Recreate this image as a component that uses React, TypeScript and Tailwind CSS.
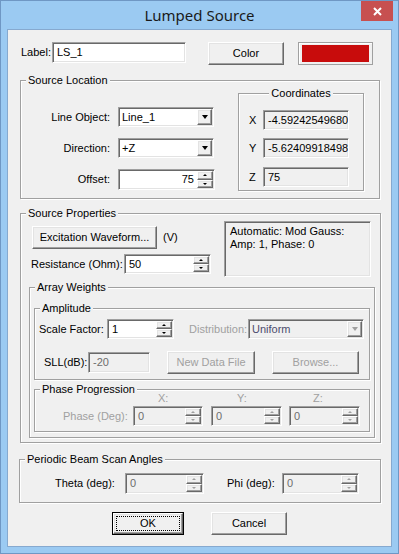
import React from "react";

const raised =
  "bg-[#f0f0f0] border border-t-white border-l-white border-r-[#696969] border-b-[#696969] shadow-[inset_-1px_-1px_0_#a0a0a0,inset_1px_1px_0_#e3e3e3]";
const sunken =
  "border border-t-[#a0a0a0] border-l-[#a0a0a0] border-r-white border-b-white shadow-[inset_1px_1px_0_#696969,inset_-1px_-1px_0_#e3e3e3]";

type BoxProps = {
  className?: string;
  value?: string;
  disabled?: boolean;
  white?: boolean;
  right?: boolean;
  children?: React.ReactNode;
};

function Field({ className, value, disabled, white }: BoxProps) {
  return (
    <div
      className={`${sunken} flex items-center pl-[4px] overflow-hidden whitespace-nowrap ${
        white ? "bg-white" : "bg-[#f0f0f0]"
      } ${disabled ? "text-[#6d6d6d]" : "text-black"} ${className}`}
    >
      {value}
    </div>
  );
}

function Btn({ className, disabled, children }: BoxProps) {
  return (
    <div
      className={`${raised} flex items-center justify-center whitespace-nowrap ${
        disabled ? "text-[#a0a0a0]" : "text-black"
      } ${className}`}
    >
      {children}
    </div>
  );
}

function Combo({ className, value, disabled }: BoxProps) {
  return (
    <div
      className={`${sunken} flex p-[1px] ${disabled ? "bg-[#f0f0f0] text-[#4d4d6d]" : "bg-white text-black"} ${className}`}
    >
      <div className="flex-1 flex items-center pl-[2px] overflow-hidden whitespace-nowrap">{value}</div>
      <div className={`${raised} w-[15px] flex items-center justify-center`}>
        <div
          className={`w-[1px] h-0 border-x-[3px] border-x-transparent border-t-[4px] ${
            disabled ? "border-t-[#a0a0a0]" : "border-t-black"
          }`}
        />
      </div>
    </div>
  );
}

function Spin({ className, value, disabled, right }: BoxProps) {
  const arrow = disabled ? "border-b-[#a0a0a0]" : "border-b-black";
  const arrowDown = disabled ? "border-t-[#a0a0a0]" : "border-t-black";
  return (
    <div
      className={`${sunken} flex p-[1px] ${disabled ? "bg-[#f0f0f0] text-[#6d6d6d]" : "bg-white text-black"} ${className}`}
    >
      <div
        className={`flex-1 flex items-center overflow-hidden whitespace-nowrap ${
          right ? "justify-end pr-[3px]" : "pl-[3px]"
        }`}
      >
        {value}
      </div>
      <div className="w-[16px] flex flex-col">
        <div className={`${raised} flex-1 flex items-center justify-center`}>
          <div className={`w-[1px] h-0 border-x-[2px] border-x-transparent border-b-[2px] ${arrow}`} />
        </div>
        <div className={`${raised} flex-1 flex items-center justify-center`}>
          <div className={`w-[1px] h-0 border-x-[2px] border-x-transparent border-t-[2px] ${arrowDown}`} />
        </div>
      </div>
    </div>
  );
}

function Group({
  className,
  legend,
  center,
  children,
}: {
  className?: string;
  legend: string;
  center?: boolean;
  children?: React.ReactNode;
}) {
  return (
    <fieldset
      className={`border border-[#a0a0a0] shadow-[inset_1px_1px_0_#fff,1px_1px_0_#fff] p-0 m-0 min-w-0 shrink-0 ${className}`}
    >
      <legend
        className={`px-[2px] leading-[13px] bg-[#f0f0f0] ${center ? "mx-auto" : "ml-[5px]"}`}
      >
        {legend}
      </legend>
      {children}
    </fieldset>
  );
}

export default function App() {
  return (
    <div className="w-[399px] h-[554px] bg-[#9bcaf2] border border-[#6f97c4] flex flex-col text-[11px] leading-[13px] text-black font-['Liberation_Sans',Arial,sans-serif]">
      {/* title bar */}
      <div className="h-[28px] flex items-start shrink-0">
        <div className="w-[37px]" />
        <div className="flex-1 text-center mt-[4px] text-[15px] leading-[20px] text-[#1a1a1a] font-['Noto_Sans','Open_Sans',sans-serif]">
          Lumped Source
        </div>
        <div className="w-[32px] h-[20px] mr-[5px] bg-[#c75050] flex items-center justify-center">
          <svg width="9" height="9" viewBox="0 0 9 9">
            <path d="M1 1L8 8M8 1L1 8" stroke="#fff" strokeWidth="2" />
          </svg>
        </div>
      </div>

      {/* client area */}
      <div className="mx-[6px] h-[518px] border border-[#86a9cf] bg-[#f0f0f0] flex flex-col shrink-0">
        {/* label row */}
        <div className="flex items-start mt-[12px]">
          <span className="ml-[13px] w-[31px] h-[21px] flex items-center">Label:</span>
          <Field className="w-[134px] h-[21px]" value="LS_1" white />
          <Btn className="ml-[22px] w-[76px] h-[23px]">Color</Btn>
          <div className="ml-[14px] w-[75px] h-[23px] border border-[#a0a0a0] shadow-[inset_1px_1px_0_#fff] px-[3px] py-[2px] flex">
            <div className="flex-1 bg-[#c80c0c]" />
          </div>
        </div>

        {/* source location */}
        <Group className="mt-[9px] ml-[12px] w-[360px] h-[125px]" legend="Source Location">
          <div className="flex">
            <div className="flex flex-col mt-[20px]">
              <div className="flex items-center">
                <span className="w-[89px] text-right">Line Object:</span>
                <Combo className="ml-[8px] w-[96px] h-[20px]" value="Line_1" />
              </div>
              <div className="flex items-center mt-[11px]">
                <span className="w-[89px] text-right">Direction:</span>
                <Combo className="ml-[8px] w-[96px] h-[20px]" value="+Z" />
              </div>
              <div className="flex items-center mt-[11px]">
                <span className="w-[89px] text-right">Offset:</span>
                <Spin className="ml-[8px] w-[97px] h-[21px]" value="75" right />
              </div>
            </div>
            <Group className="ml-[23px] w-[126px] h-[104px]" legend="Coordinates" center>
              <div className="flex items-center mt-[10px]">
                <span className="ml-[10px] w-[14px]">X</span>
                <Field className="w-[86px] h-[20px]" value="-4.59242549680" />
              </div>
              <div className="flex items-center mt-[8px]">
                <span className="ml-[10px] w-[14px]">Y</span>
                <Field className="w-[86px] h-[20px]" value="-5.62409918498" />
              </div>
              <div className="flex items-center mt-[9px]">
                <span className="ml-[10px] w-[14px]">Z</span>
                <Field className="w-[86px] h-[20px]" value="75" />
              </div>
            </Group>
          </div>
        </Group>

        {/* source properties */}
        <Group className="mt-[8px] ml-[12px] w-[361px] h-[236px]" legend="Source Properties">
          <div className="flex items-start">
            <div className="w-[203px] flex flex-col">
              <div className="flex items-center mt-[6px]">
                <Btn className="ml-[11px] w-[125px] h-[23px]">Excitation Waveform...</Btn>
                <span className="ml-[6px]">(V)</span>
              </div>
              <div className="flex items-center mt-[5px]">
                <span className="ml-[10px] w-[93px]">Resistance (Ohm):</span>
                <Spin className="w-[87px] h-[20px]" value="50" />
              </div>
            </div>
            <div className={`${sunken} mt-[1px] w-[147px] h-[56px] pt-[3px] pl-[5px]`}>
              Automatic: Mod Gauss:
              <br />
              Amp: 1, Phase: 0
            </div>
          </div>

          <Group className="mt-[4px] ml-[8px] w-[346px] h-[157px]" legend="Array Weights">
            <Group className="mt-[8px] ml-[4px] w-[336px] h-[78px]" legend="Amplitude">
              <div className="flex items-center mt-[4px]">
                <span className="ml-[4px] w-[68px]">Scale Factor:</span>
                <Spin className="w-[67px] h-[20px]" value="1" />
                <span className="ml-[15px] w-[59px] text-[#a0a0a0]">Distribution:</span>
                <Combo className="w-[116px] h-[20px]" value="Uniform" disabled />
              </div>
              <div className="flex items-center mt-[12px]">
                <span className="ml-[9px] w-[44px]">SLL(dB):</span>
                <Field className="w-[62px] h-[21px]" value="-20" disabled />
                <Btn className="ml-[17px] w-[88px] h-[23px]" disabled>
                  New Data File
                </Btn>
                <Btn className="ml-[17px] w-[87px] h-[23px]" disabled>
                  Browse...
                </Btn>
              </div>
            </Group>
            <Group className="mt-[3px] ml-[4px] w-[336px] h-[49px]" legend="Phase Progression">
              <div className="flex -mt-[4px] h-[13px] text-[#a0a0a0]">
                <span className="ml-[123px] w-[79px]">X:</span>
                <span className="w-[76px]">Y:</span>
                <span>Z:</span>
              </div>
              <div className="flex items-center mt-[1px]">
                <span className="ml-[28px] w-[70px] text-[#a0a0a0]">Phase (Deg):</span>
                <Spin className="w-[70px] h-[20px]" value="0" disabled />
                <Spin className="ml-[8px] w-[71px] h-[20px]" value="0" disabled />
                <Spin className="ml-[7px] w-[71px] h-[20px]" value="0" disabled />
              </div>
            </Group>
          </Group>
        </Group>

        {/* periodic beam scan */}
        <Group className="mt-[10px] ml-[11px] w-[362px] h-[50px]" legend="Periodic Beam Scan Angles">
          <div className="flex items-center mt-[7px]">
            <span className="ml-[35px] w-[70px]">Theta (deg):</span>
            <Spin className="w-[79px] h-[21px]" value="0" disabled />
            <span className="ml-[23px] w-[55px]">Phi (deg):</span>
            <Spin className="w-[77px] h-[21px]" value="0" disabled />
          </div>
        </Group>

        {/* dialog buttons */}
        <div className="flex mt-[9px]">
          <div className="ml-[104px] w-[72px] h-[23px] border border-black flex">
            <div className={`${raised} flex-1 flex p-[2px]`}>
              <div className="flex-1 border border-dotted border-black flex items-center justify-center">OK</div>
            </div>
          </div>
          <Btn className="ml-[27px] w-[76px] h-[23px]">Cancel</Btn>
        </div>
      </div>
    </div>
  );
}
